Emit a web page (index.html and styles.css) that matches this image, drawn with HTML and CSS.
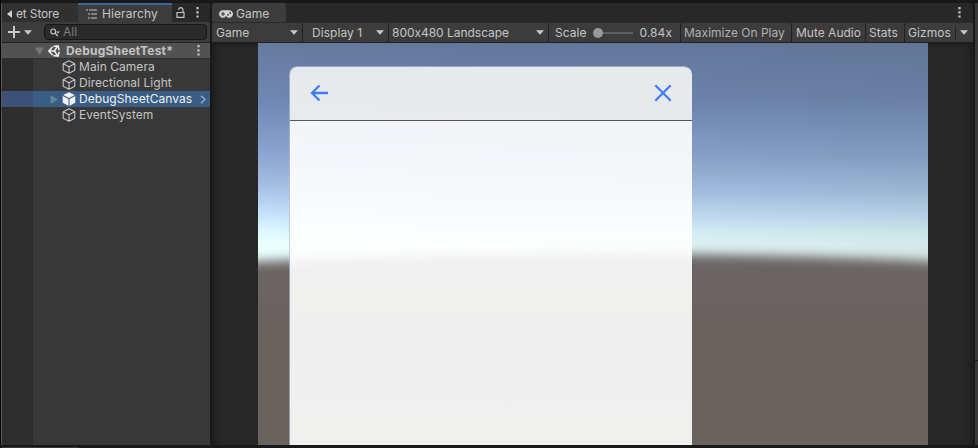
FILE: index.html
```
<!DOCTYPE html>
<html lang="en">
<head>
<meta charset="utf-8">
<title>Editor</title>
<link rel="stylesheet" href="styles.css">
</head>
<body>
<svg class="defs" width="0" height="0">
  <defs>
    <symbol id="cube" viewBox="0 0 14 14"><path d="M7 .8 12.8 3.7V10.3L7 13.3 1.2 10.3V3.7ZM1.2 3.7 7 6.7 12.8 3.7M7 6.7V13.3" fill="none" stroke="#c4c4c4" stroke-width="1.1" stroke-linejoin="round"/></symbol>
    <symbol id="prefab" viewBox="0 0 14 14"><path d="M7 .3 12.8 3 7 6 1.2 3ZM.7 4 6.5 7V13.8L.7 10.7ZM13.3 4 7.5 7V13.8L13.3 10.7Z" fill="#f2f2f2"/></symbol>
    <symbol id="dots" viewBox="0 0 3 11"><path d="M.4 0h2.2v2.2H.4zM.4 4.2h2.2v2.2H.4zM.4 8.4h2.2v2.2H.4z" fill="#c8c8c8"/></symbol>
    <symbol id="down" viewBox="0 0 8 5"><path d="M0 .3h8L4 4.7z" fill="#c8c8c8"/></symbol>
  </defs>
</svg>
<div class="editor">
  <section class="hierarchy">
    <div class="tabs">
      <div class="tab store"><svg width="5" height="8"><path d="M5 0v8L0 4z" fill="#d0d0d0"/></svg><span>et Store</span></div>
      <div class="tab active"><svg width="11" height="10"><path d="M0 1h2M3 1h8M2 5h2M5 5h6M2 9h2M5 9h6" stroke="#c8c8c8" stroke-width="1.2"/></svg><span>Hierarchy</span></div>
      <svg class="lock" width="9" height="11"><path d="M1 5.5h7v4.8H1zM7 5V3a2.2 2.2 0 0 0-4.4-.2" fill="none" stroke="#c4c4c4" stroke-width="1.2"/></svg>
      <svg class="menu" width="3" height="11"><use href="#dots"/></svg>
    </div>
    <div class="tools">
      <svg class="plus" width="12" height="12"><path d="M6 0v12M0 6h12" stroke="#c8c8c8" stroke-width="2"/></svg>
      <svg width="8" height="5"><use href="#down"/></svg>
      <div class="search"><svg width="10" height="9"><circle cx="3.2" cy="3.4" r="2.4" fill="none" stroke="#c4c4c4" stroke-width="1.2"/><path d="m5 5 2.8 3" stroke="#c4c4c4" stroke-width="1.3"/><path d="M6 3.5h4L8 5.6z" fill="#c4c4c4"/></svg><span>All</span></div>
    </div>
    <div class="tree">
      <div class="row scene"><svg class="fold" width="9" height="8"><path d="M0 .5h9L4.500 8z" fill="#777"/></svg><svg class="unity" width="12" height="12" viewBox="0 0 12 12"><path d="M4.500 2 .8 6l3.700 4M.8 6H6.500M6.500 6 9.600 1.100M6.500 6l3.100 4.900M5.300 1.600 10 .8l1.300 4.500M5.300 10.400l4.700.8 1.300-4.500" fill="none" stroke="#eee" stroke-width="1.500"/></svg><span>DebugSheetTest*</span><svg class="menu" width="3" height="11"><use href="#dots"/></svg></div>
      <div class="row"><svg class="icon" width="14" height="14"><use href="#cube"/></svg><span>Main Camera</span></div>
      <div class="row"><svg class="icon" width="14" height="14"><use href="#cube"/></svg><span>Directional Light</span></div>
      <div class="row selected"><svg class="fold" width="8" height="9"><path d="M.5 0v9L8 4.500z" fill="#65829d"/></svg><svg class="icon" width="14" height="14"><use href="#prefab"/></svg><span>DebugSheetCanvas</span><svg class="enter" width="6" height="9"><path d="m1 .8 4 3.700-4 3.700" fill="none" stroke="#91b4d2" stroke-width="1.300"/></svg></div>
      <div class="row"><svg class="icon" width="14" height="14"><use href="#cube"/></svg><span>EventSystem</span></div>
    </div>
  </section>
  <section class="game">
    <div class="tabs">
      <div class="tab game-tab"><svg width="14" height="8"><path d="M3.800.2h6.400a3.800 3.800 0 1 1-1.700 7.200L7.800 6.500H6.200l-.7.900A3.800 3.800 0 1 1 3.800.2z" fill="#d2d2d2"/><path d="M2 4h4M4 2v4" stroke="#383838" stroke-width="1.100"/><circle cx="9" cy="4.800" r=".9" fill="#383838"/><circle cx="11.200" cy="3" r=".9" fill="#383838"/></svg><span>Game</span></div>
      <svg class="menu" width="3" height="11"><use href="#dots"/></svg>
    </div>
    <div class="bar">
      <div class="cell mode"><span>Game</span><svg width="8" height="5"><use href="#down"/></svg></div>
      <div class="cell display"><span>Display 1</span><svg width="8" height="5"><use href="#down"/></svg></div>
      <div class="cell size"><span>800x480 Landscape</span><svg width="8" height="5"><use href="#down"/></svg></div>
      <div class="cell scale"><span>Scale</span><i class="slider"></i><span class="value">0.84x</span></div>
      <div class="cell maximize"><span>Maximize On Play</span></div>
      <div class="cell mute"><span>Mute Audio</span></div>
      <div class="cell stats"><span>Stats</span></div>
      <div class="cell gizmos"><span>Gizmos</span><i class="split"></i><svg width="8" height="5"><use href="#down"/></svg></div>
    </div>
    <div class="viewport">
      <div class="screen">
        <svg class="sky" width="670" height="402">
          <defs>
            <linearGradient id="air" x2="0" y2="1"><stop offset="0" stop-color="#667aa0"/><stop offset=".14" stop-color="#6f87b2"/><stop offset=".28" stop-color="#8ba6d0"/><stop offset=".366" stop-color="#a8c4e8"/><stop offset=".43" stop-color="#c8e4fc"/><stop offset=".47" stop-color="#def9ff"/><stop offset=".5" stop-color="#ecffff"/><stop offset="1" stop-color="#ecffff"/></linearGradient>
            <linearGradient id="shade"><stop offset="0" stop-color="#405060" stop-opacity="0"/><stop offset=".4" stop-color="#405060" stop-opacity=".08"/><stop offset=".65" stop-color="#405058" stop-opacity=".08"/><stop offset="1" stop-color="#405048" stop-opacity=".13"/></linearGradient>
            <linearGradient id="earth" x2="0" y2="1"><stop offset="0" stop-color="#6b6665"/><stop offset=".3" stop-color="#68625f"/><stop offset="1" stop-color="#68635d"/></linearGradient>
            <filter id="haze" x="-5%" y="-20%" width="110%" height="140%" color-interpolation-filters="sRGB"><feGaussianBlur stdDeviation="0 5.500"/></filter>
          </defs>
          <path d="M0 0h670v402H0z" fill="url(#air)"/><path d="M0 0h670v402H0z" fill="url(#shade)"/>
          <path d="M-20 219Q160 211 350 211T690 219V440H-20z" fill="url(#earth)" filter="url(#haze)"/>
        </svg>
        <div class="sheet">
          <div class="sheet-head">
            <svg width="20" height="20"><path d="M19 10H3M10.500 2.500 3 10l7.500 7.500" fill="none" stroke="#427cf3" stroke-width="2.300"/></svg>
            <svg width="18" height="18"><path d="m1.300 1.300 15.400 15.400M16.700 1.300 1.300 16.700" stroke="#427cf3" stroke-width="2.300"/></svg>
          </div>
        </div>
      </div>
    </div>
  </section>
  <aside class="edge"></aside>
</div>
<footer class="bottom"><i></i></footer>
</body>
</html>
```
FILE: styles.css
```
* { box-sizing: border-box; }
body { margin: 0; width: 978px; height: 448px; overflow: hidden; background: #191919; color: #c4c4c4; font: 12px/16px Inter, "Liberation Sans", sans-serif; letter-spacing: .05px; }
svg { display: block; flex: none; }
.defs { position: absolute; }
span { white-space: nowrap; }
.editor { display: flex; height: 445px; padding-top: 3px; border-left: 1px solid #080808; }
.hierarchy { width: 209px; height: 442px; border-left: 1px solid #555; background: #383838; margin-right: 2px; flex: none; }
.tabs { display: flex; height: 19px; background: #282828; align-items: center; }
.tab { display: flex; align-items: center; height: 19px; }
.store { width: 76px; padding: 2px 0 0 5px; background: #303030; gap: 4px; letter-spacing: -.15px; }
.active { width: 94px; padding: 1px 0 0 8px; border-top: 2px solid #3a669c; background: #3c3c3c; gap: 5px; letter-spacing: .1px; }
.lock { margin-left: 4px; margin-top: -1px; }
.tabs .menu { margin-left: 11px; }
.tools { display: flex; height: 21px; align-items: center; background: #3c3c3c; border-bottom: 1px solid #242424; padding-left: 6px; }
.plus { margin-right: 4px; }
.search { display: flex; align-items: center; width: 163px; height: 16px; margin-left: 12px; padding-left: 5px; border: 1px solid #171717; border-radius: 4px; background: #2a2a2a; color: #7e7e7e; gap: 3px; }
.tree { height: 402px; background: linear-gradient(90deg, #2d2d2d 31px, #383838 31px); }
.row { display: flex; height: 16px; align-items: center; padding-left: 60px; gap: 3px; }
.scene { background: #525252; border-bottom: 1px solid #303030; padding-left: 33px; font-weight: 700; letter-spacing: .2px; }
.unity { margin-left: 1px; margin-right: 3px; }
.scene .menu { margin-left: auto; margin-right: 10px; }
.selected { padding-left: 48px; background: linear-gradient(90deg, #3d5078 31px, #395d84 31px); color: #f0f0f0; }
.selected .icon { margin-left: 1px; }
.selected .enter { margin-left: auto; margin-right: 4px; }
.game { width: 761px; flex: none; }
.game .tabs { border-radius: 3px 4px 0 0; }
.game-tab { width: 74px; padding: 2px 0 0 7px; border-radius: 3px 3px 0 0; gap: 3px; background: #3c3c3c; }
.game .tabs .menu { margin-left: auto; margin-right: 12px; }
.bar { display: flex; height: 21px; background: #3c3c3c; border-bottom: 1px solid #202020; border-top: 1px solid #2a2a2a; width: 761px; }
.cell { display: flex; align-items: center; justify-content: space-between; height: 19px; padding: 0 4px 0 3px; border-right: 1px solid #222; flex: none; }
.mode { width: 91px; padding-left: 4px; }
.display { width: 86px; padding-left: 9px; }
.size { width: 160px; letter-spacing: -.03px; }
.scale { width: 132px; padding: 0 8px 0 6px; }
.slider { display: flex; align-items: center; width: 40px; height: 10px; background: linear-gradient(#606060, #606060) 0 4px / 40px 2px no-repeat; }
.slider::before { content: ""; width: 10px; height: 10px; border-radius: 5px; background: #999; }
.maximize { width: 111px; color: #b0b0b0; letter-spacing: 0; }
.mute { width: 74px; padding-left: 4px; letter-spacing: 0; }
.stats { width: 39px; }
.gizmos { width: 68px; border: 0; padding-right: 5px; }
.split { width: 1px; height: 13px; background: #242424; }
.viewport { height: 402px; padding-left: 46px; background: #282828; box-shadow: inset 6px 4px 6px -4px #181818, inset -6px 0 6px -4px #181818; }
.screen { display: grid; width: 670px; height: 402px; overflow: hidden; }
.sky, .sheet { grid-area: 1 / 1; }
.sheet { width: 403px; height: 400px; margin: 23px 0 0 31px; border: 1px solid rgba(180,190,215,.65); border-right-width: 0; border-radius: 8px 8px 0 0; background: rgba(255,255,255,.9); background-clip: padding-box; overflow: hidden; }
.sheet-head { display: flex; justify-content: space-between; align-items: center; height: 54px; padding: 0 20px 1px 19px; border-bottom: 1px solid #555; background: rgba(205,209,207,.25); }
.edge { width: 4px; height: 442px; margin-left: 2px; background: linear-gradient(transparent 357px, #1b1b1b 357px 358px, transparent 358px), #383838; }
.bottom { height: 3px; padding-top: 2px; background: #191919; }
.bottom i { display: block; width: 77px; height: 1px; margin-left: 2px; background: #383838; }
```
